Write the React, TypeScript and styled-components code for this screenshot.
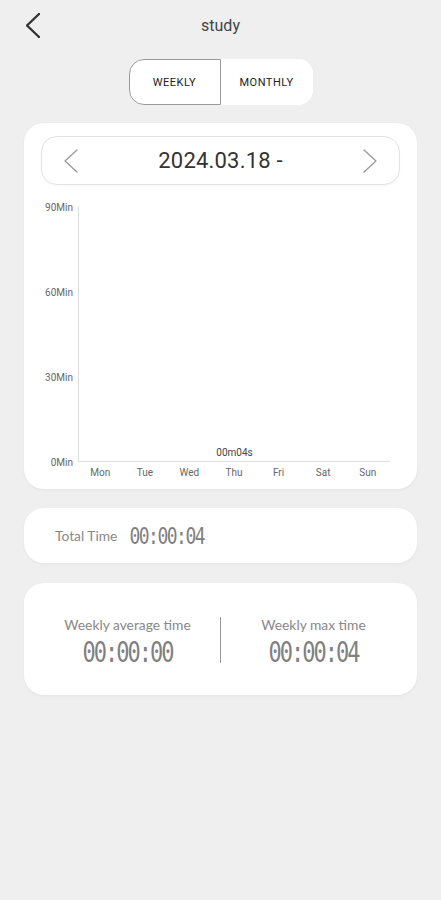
import React from 'react';
import styled, { createGlobalStyle } from 'styled-components';

const GlobalStyle = createGlobalStyle`
  body {
    margin: 0;
    background: #efefef;
    font-family: Roboto, 'Liberation Sans', sans-serif;
  }
`;

const Page = styled.div`
  width: 441px;
  min-height: 900px;
  background: #efefef;
`;

// 상단 헤더
const Header = styled.div`
  display: grid;
  grid-template-columns: 60px 1fr 60px;
  align-items: center;
  height: 50px;
`;

const BackButton = styled.button`
  border: none;
  background: none;
  padding: 0 0 0 26px;
  height: 50px;
  display: flex;
  align-items: center;
  cursor: pointer;
`;

const Title = styled.h1`
  margin: 0;
  text-align: center;
  font-size: 16px;
  font-weight: 400;
  color: #444;
`;

// 주간 / 월간 토글
const Toggle = styled.div`
  display: flex;
  width: 184px;
  height: 46px;
  margin: 9px auto 0;
  background: #fff;
  border-radius: 15px;
`;

const ToggleButton = styled.button<{ $active?: boolean }>`
  flex: 1;
  border: 1px solid ${(p) => (p.$active ? '#9a9a9a' : 'transparent')};
  border-radius: ${(p) => (p.$active ? '15px 0 0 15px' : '0 15px 15px 0')};
  background: #fff;
  font-family: Roboto, sans-serif;
  font-size: 11px;
  font-weight: 400;
  letter-spacing: 0.5px;
  color: #222;
  cursor: pointer;
`;

const Card = styled.section<{ $height: number }>`
  margin: 0 24px;
  height: ${(p) => p.$height}px;
  box-sizing: border-box;
  background: #fff;
  border-radius: 20px;
  box-shadow: 0 1px 3px rgba(0, 0, 0, 0.05);
`;

const ChartCard = styled(Card)`
  margin-top: 18px;
  padding: 13px 17px 0;
`;

const DateBox = styled.div`
  display: flex;
  align-items: center;
  justify-content: space-between;
  height: 49px;
  box-sizing: border-box;
  padding: 0 22px;
  border: 1px solid #e2e2e2;
  border-radius: 16px;
  box-shadow: 0 1px 2px rgba(0, 0, 0, 0.04);
`;

const DateText = styled.span`
  font-size: 22px;
  color: #333;
  letter-spacing: 0.2px;
`;

const ArrowButton = styled.button`
  border: none;
  background: none;
  padding: 0;
  display: flex;
  cursor: pointer;
`;

// 차트
const Chart = styled.div`
  display: grid;
  grid-template-columns: 37px 312px;
  margin-top: 22px;
`;

const YLabels = styled.div`
  display: flex;
  flex-direction: column;
  justify-content: space-between;
  height: 255px;
  padding-right: 5px;
`;

const YLabel = styled.div`
  height: 0;
  display: flex;
  align-items: center;
  justify-content: flex-end;
  font-size: 10px;
  color: #666;
`;

const Plot = styled.div`
  display: grid;
  grid-template-columns: repeat(7, 1fr);
  align-items: end;
  height: 255px;
  box-sizing: border-box;
  border-left: 1px solid #dcdcdc;
  border-bottom: 1px solid #dcdcdc;
`;

const BarLabel = styled.div`
  text-align: center;
  font-size: 10px;
  color: #444;
  padding-bottom: 3px;
`;

const Days = styled.div`
  grid-column: 2;
  display: grid;
  grid-template-columns: repeat(7, 1fr);
  margin-top: 5px;
`;

const Day = styled.span`
  text-align: center;
  font-size: 10px;
  line-height: 12px;
  color: #666;
`;

const TotalCard = styled(Card)`
  margin-top: 19px;
  display: flex;
  align-items: center;
  gap: 12px;
  padding-left: 31px;
`;

const Label = styled.span`
  font-family: Lato, 'Open Sans', sans-serif;
  font-size: 13.8px;
  line-height: 17px;
  color: #888;
`;

// 디지털 시계 느낌: 세로로 늘린 고정폭 글꼴
const Clock = styled.span<{ $size: number }>`
  display: inline-block;
  font-family: 'DejaVu Sans Mono', 'Liberation Mono', monospace;
  font-size: ${(p) => p.$size}px;
  letter-spacing: ${(p) => (p.$size > 20 ? -2 : -1.5)}px;
  color: #808080;
  line-height: ${(p) => p.$size}px;
  transform: scaleY(1.3);
`;

const StatsCard = styled(Card)`
  margin-top: 20px;
  display: grid;
  grid-template-columns: 1fr 1px 1fr;
  align-items: center;
  padding: 2px 11px 0;
`;

const Stat = styled.div`
  display: flex;
  flex-direction: column;
  align-items: center;
  gap: 9px;
`;

const Divider = styled.div`
  width: 1px;
  height: 46px;
  background: #999;
`;

const Chevron = ({ dir, color, width, height, stroke }: { dir: 'left' | 'right'; color: string; width: number; height: number; stroke: number }) => (
  <svg width={width} height={height} viewBox={`0 0 ${width} ${height}`} fill="none">
    <polyline
      points={
        dir === 'left'
          ? `${width - 1},1 1,${height / 2} ${width - 1},${height - 1}`
          : `1,1 ${width - 1},${height / 2} 1,${height - 1}`
      }
      stroke={color}
      strokeWidth={stroke}
      strokeLinecap="round"
      strokeLinejoin="round"
    />
  </svg>
);

const days = ['Mon', 'Tue', 'Wed', 'Thu', 'Fri', 'Sat', 'Sun'];
const values: Record<string, string> = { Thu: '00m04s' };

function App() {
  return (
    <Page>
      <GlobalStyle />
      <Header>
        <BackButton aria-label="back">
          <Chevron dir="left" color="#333" width={14} height={25} stroke={2.4} />
        </BackButton>
        <Title>study</Title>
        <div />
      </Header>

      <Toggle>
        <ToggleButton $active>WEEKLY</ToggleButton>
        <ToggleButton>MONTHLY</ToggleButton>
      </Toggle>

      <ChartCard $height={366}>
        <DateBox>
          <ArrowButton aria-label="prev">
            <Chevron dir="left" color="#999" width={14} height={24} stroke={1.3} />
          </ArrowButton>
          <DateText>2024.03.18 -</DateText>
          <ArrowButton aria-label="next">
            <Chevron dir="right" color="#999" width={14} height={24} stroke={1.3} />
          </ArrowButton>
        </DateBox>

        <Chart>
          <YLabels>
            <YLabel>90Min</YLabel>
            <YLabel>60Min</YLabel>
            <YLabel>30Min</YLabel>
            <YLabel>0Min</YLabel>
          </YLabels>
          <Plot>
            {days.map((d) => (
              <BarLabel key={d}>{values[d] ?? ''}</BarLabel>
            ))}
          </Plot>
          <Days>
            {days.map((d) => (
              <Day key={d}>{d}</Day>
            ))}
          </Days>
        </Chart>
      </ChartCard>

      <TotalCard $height={55}>
        <Label>Total Time</Label>
        <Clock $size={18}>00:00:04</Clock>
      </TotalCard>

      <StatsCard $height={112}>
        <Stat>
          <Label>Weekly average time</Label>
          <Clock $size={22}>00:00:00</Clock>
        </Stat>
        <Divider />
        <Stat>
          <Label>Weekly max time</Label>
          <Clock $size={22}>00:00:04</Clock>
        </Stat>
      </StatsCard>
    </Page>
  );
}

export default App;
